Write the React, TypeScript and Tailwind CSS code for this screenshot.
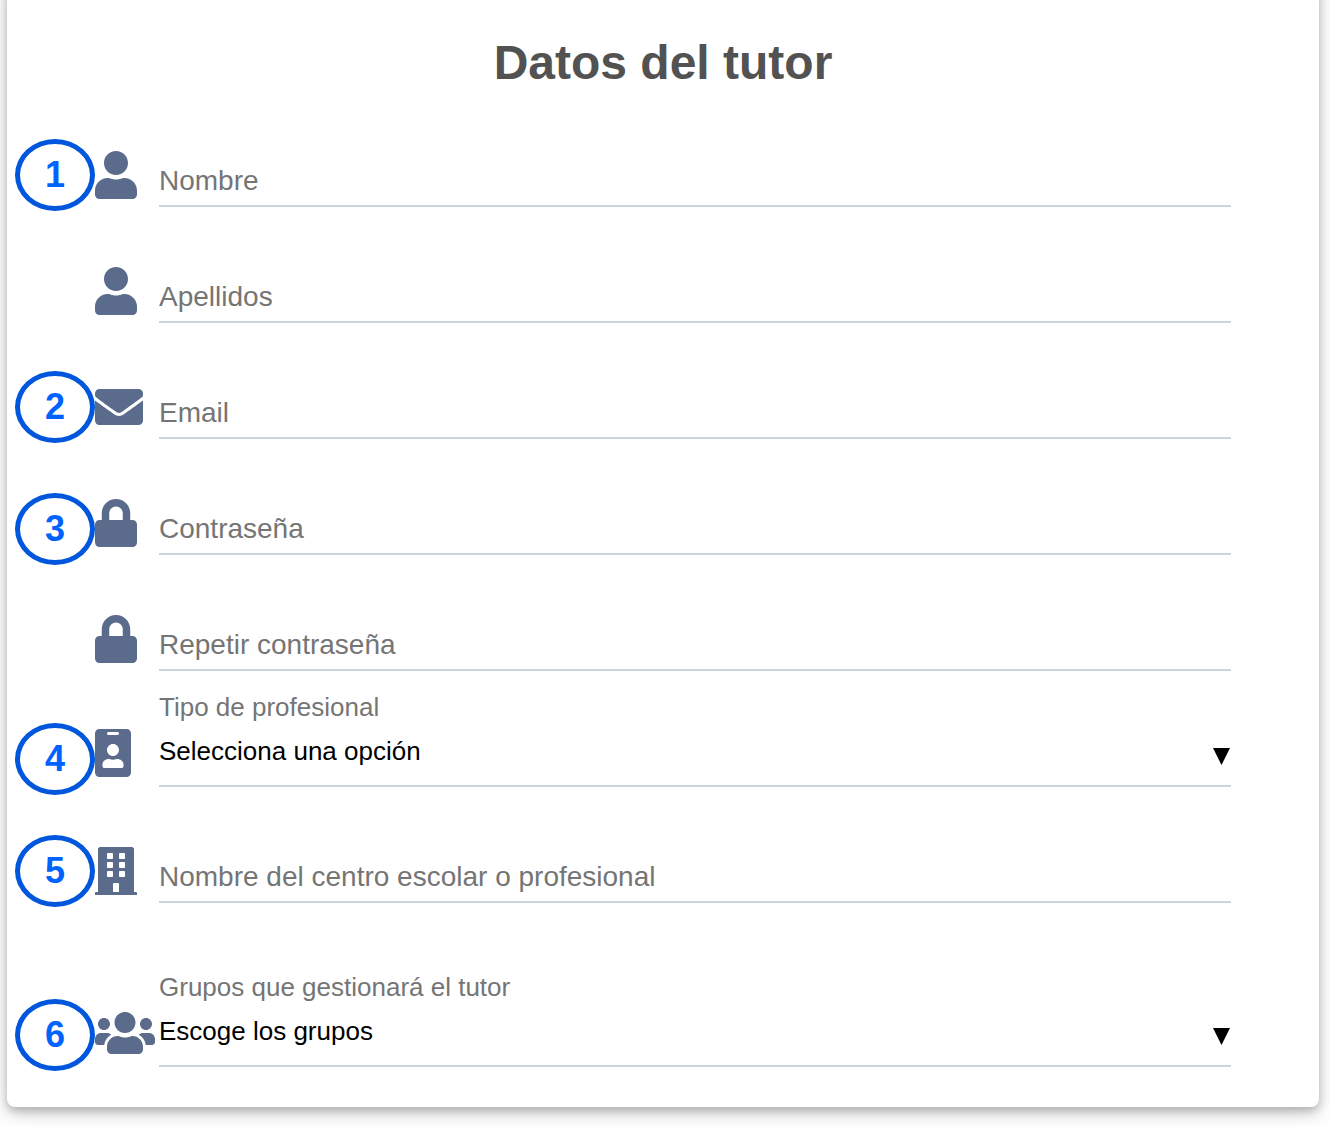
import type { IconType } from "react-icons";
import { FaBuilding, FaEnvelope, FaIdBadge, FaLock, FaUser, FaUsers } from "react-icons/fa";

interface Field {
  id: string;
  kind: "text" | "email" | "password" | "select";
  label: string;
  icon: IconType;
  iconWidth: string;
  option?: string;
  step?: number;
  spacing?: string;
  stepPlace?: string;
}

const FIELDS: Field[] = [
  { id: "nombre", kind: "text", label: "Nombre", icon: FaUser, iconWidth: "w-10.5", step: 1 },
  { id: "apellidos", kind: "text", label: "Apellidos", icon: FaUser, iconWidth: "w-10.5" },
  { id: "email", kind: "email", label: "Email", icon: FaEnvelope, iconWidth: "w-12", step: 2 },
  {
    id: "password",
    kind: "password",
    label: "Contraseña",
    icon: FaLock,
    iconWidth: "w-10.5",
    step: 3,
    stepPlace: "-bottom-2.5",
  },
  { id: "password2", kind: "password", label: "Repetir contraseña", icon: FaLock, iconWidth: "w-10.5" },
  {
    id: "tipo",
    kind: "select",
    label: "Tipo de profesional",
    option: "Selecciona una opción",
    icon: FaIdBadge,
    iconWidth: "w-9",
    step: 4,
    spacing: "mt-5",
    stepPlace: "-bottom-2",
  },
  {
    id: "centro",
    kind: "text",
    label: "Nombre del centro escolar o profesional",
    icon: FaBuilding,
    iconWidth: "w-10.5",
    step: 5,
  },
  {
    id: "grupos",
    kind: "select",
    label: "Grupos que gestionará el tutor",
    option: "Escoge los grupos",
    icon: FaUsers,
    iconWidth: "w-15",
    step: 6,
    spacing: "mt-17",
  },
];

function StepBadge({ step, place = "-bottom-1" }: { step: number; place?: string }) {
  return (
    <span
      className={`absolute -left-20 ${place} flex h-18 w-20 items-center justify-center rounded-[50%] border-5 border-[#0056dc] text-4xl font-bold text-[#0062ff]`}
    >
      {step}
    </span>
  );
}

function FieldRow({ field }: { field: Field }) {
  const Icon = field.icon;
  const isSelect = field.kind === "select";

  return (
    <div className={`relative flex items-end ${field.spacing ?? "mt-15"}`}>
      <div className={`w-16 shrink-0 text-[#5b6b8c] ${isSelect ? "pb-2.5" : "pb-2"}`}>
        <Icon className={`h-12 ${field.iconWidth}`} aria-hidden="true" />
      </div>
      {isSelect ? (
        <div className="min-w-0 flex-1">
          <label htmlFor={field.id} className="block text-[26px] leading-8 text-[#757575]">
            {field.label}
          </label>
          <div className="relative">
            <select
              id={field.id}
              className="block h-16 w-full appearance-none border-b-2 border-[#cdd3df] bg-transparent pt-3 pb-4.5 text-[26px] leading-8 text-black outline-none"
            >
              <option>{field.option}</option>
            </select>
            <svg viewBox="0 0 17 17" className="pointer-events-none absolute right-px bottom-5.5 size-[17px]" aria-hidden="true">
              <path d="M0 0h17L8.5 17z" />
            </svg>
          </div>
        </div>
      ) : (
        <input
          id={field.id}
          type={field.kind}
          placeholder={field.label}
          aria-label={field.label}
          className="block h-13 min-w-0 flex-1 border-b-2 border-[#cdd3df] bg-transparent pt-2.5 pb-2 text-[28px] leading-8 outline-none placeholder:text-[#757575]"
        />
      )}
      {field.step && <StepBadge step={field.step} place={field.stepPlace} />}
    </div>
  );
}

export default function App() {
  return (
    <main className="overflow-hidden bg-white pr-[11px] pb-5 pl-[7px] font-['Liberation_Sans',Arial,sans-serif]">
      <form className="-mt-5 rounded-lg bg-white px-22 pt-[55px] pb-10 shadow-[0_4px_8px_rgba(0,0,0,0.2),0_6px_20px_rgba(0,0,0,0.19)]">
        <h1 className="text-center text-5xl leading-14 font-bold text-[#525252]">Datos del tutor</h1>
        {FIELDS.map((field) => (
          <FieldRow key={field.id} field={field} />
        ))}
      </form>
    </main>
  );
}
